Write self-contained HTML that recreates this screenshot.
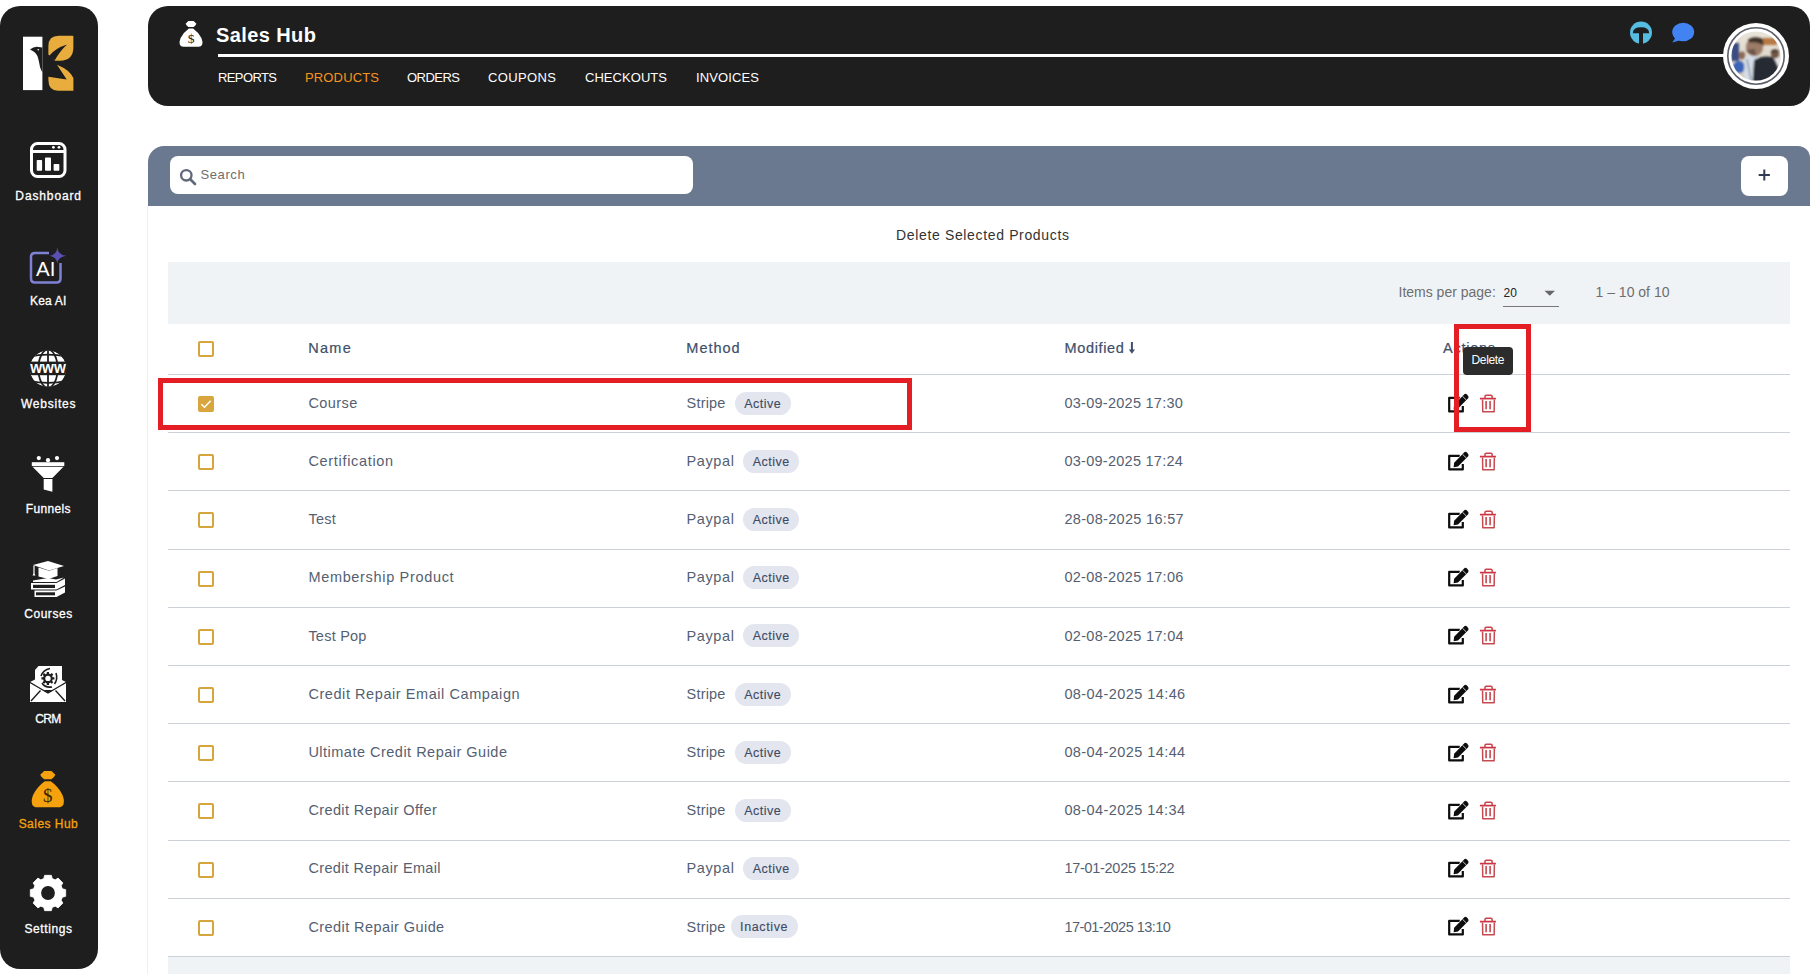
<!DOCTYPE html>
<html><head><meta charset="utf-8"><style>
*{margin:0;padding:0;box-sizing:border-box;}
html,body{width:1810px;height:974px;overflow:hidden;background:#ffffff;font-family:"Liberation Sans",sans-serif;}
.t{position:absolute;white-space:nowrap;}
svg{position:absolute;overflow:visible;}
#sidebar{position:absolute;left:0;top:6px;width:98px;height:963px;background:#1e1e1e;border-radius:20px;}
.sl{position:absolute;left:0;width:96.4px;text-align:center;color:#fff;font-size:12px;line-height:12px;letter-spacing:0.7px;white-space:nowrap;-webkit-text-stroke:0.3px currentColor;}
#header{position:absolute;left:148px;top:6px;width:1662px;height:100px;background:#1e1e1e;border-radius:20px;}
.nav{position:absolute;top:70.8px;font-size:13px;line-height:13px;color:#fff;white-space:nowrap;}
#card{position:absolute;left:147px;top:206px;width:1663px;height:780px;background:#fff;border-left:1px solid #efefef;}
#cardhead{position:absolute;left:148px;top:146px;width:1662px;height:60px;background:#6b7990;border-radius:16px 12px 0 0;}
#search{position:absolute;left:170px;top:156px;width:523px;height:38px;background:#fff;border-radius:8px;}
#plus{position:absolute;left:1741px;top:156px;width:47px;height:40px;background:#fff;border-radius:8px;}
#pag{position:absolute;left:168px;top:262px;width:1622px;height:62px;background:#eff3f6;}
#foot{position:absolute;left:168px;top:957px;width:1622px;height:30px;background:#eff3f6;}
.hd{position:absolute;top:341px;font-size:14.5px;line-height:14.5px;color:#3e4f69;font-weight:400;-webkit-text-stroke:0.2px #3e4f69;letter-spacing:1.0px;white-space:nowrap;}
.dv{position:absolute;left:168px;width:1622px;height:1px;background:#cdd1d9;}
.cell{position:absolute;font-size:14.5px;line-height:14.5px;color:#555f72;white-space:nowrap;}
.badge{position:absolute;height:23px;border-radius:12px;background:#e3e5ef;color:#3e4a63;font-size:12.5px;line-height:24px;font-weight:400;-webkit-text-stroke:0.12px #3e4a63;text-align:center;white-space:nowrap;}
.cb{position:absolute;left:198px;width:16px;height:16px;border:2px solid #d6a53c;border-radius:2px;}
.redbox{position:absolute;border:5px solid #e41e25;}
</style></head>
<body>
<div id="sidebar"></div>
<svg style="left:0;top:0" width="98" height="120" viewBox="0 0 98 120">
<rect x="23" y="36.7" width="19.4" height="53.4" fill="#fff"/>
<path d="M30 49.4 Q34 46.2 38.5 47 L42.4 47.5 L42.4 72.5 Q41 70 40 67 Q38.8 60 37.6 56.5 Q36 52 30 49.4 Z" fill="#1e1e1e"/>
<circle cx="38.3" cy="49.8" r="0.8" fill="#fff"/>
<path d="M48.4 54.5 L48.4 46 Q48.4 35.7 58.7 35.7 L72.4 35.7 Q73.4 35.7 73.4 36.7 L73.4 47 Q73.4 60.7 60 60.7 L55 60.7 Z" fill="#e8ad3c"/>
<path d="M49 56 Q55.5 48 67 44.5 Q60 51 54.6 60.5 Z" fill="#1e1e1e"/>
<path d="M57 64.7 Q70 70 73.4 78 L73.4 90.7 L58 90.7 Q48.4 90.7 48.4 80 L48.4 76.7 L66.7 79.4 Z" fill="#e8ad3c"/>
</svg>
<svg style="left:0;top:130" width="98" height="60" viewBox="0 130 98 60">
<rect x="31.5" y="143.5" width="33.5" height="33" rx="6" fill="none" stroke="#fff" stroke-width="3"/>
<rect x="31.5" y="150" width="33.5" height="3" fill="#fff"/>
<circle cx="53.4" cy="147.3" r="1.4" fill="#fff"/>
<circle cx="59" cy="147.3" r="1.4" fill="#fff"/>
<rect x="36.7" y="160" width="5.4" height="10.7" rx="0.8" fill="#fff"/>
<rect x="45" y="157.5" width="6" height="13.2" rx="0.8" fill="#fff"/>
<rect x="53.6" y="164" width="5.7" height="6.7" rx="0.8" fill="#fff"/>
</svg>
<svg style="left:0;top:240" width="98" height="60" viewBox="0 240 98 60">
<path d="M49 253 L35 253 Q31 253 31 257 L31 278.5 Q31 282.5 35 282.5 L56.5 282.5 Q60.5 282.5 60.5 278.5 L60.5 263" fill="none" stroke="#7f82d4" stroke-width="2.5"/>
<path d="M57.3 247.8 Q58 254.8 66.3 255.8 Q58 256.8 57.3 263.8 Q56.6 256.8 49.5 255.8 Q56.6 254.8 57.3 247.8 Z" fill="#5a4fb2"/>
<text x="36" y="275.7" font-family="Liberation Sans" font-size="20.5" fill="#fff">AI</text>
</svg>
<svg style="left:0;top:340" width="98" height="60" viewBox="0 340 98 60">
<defs><clipPath id="gc"><circle cx="48" cy="368.7" r="18.3"/></clipPath></defs>
<g clip-path="url(#gc)">
<circle cx="48" cy="368.7" r="18.3" fill="#fff"/>
<path d="M48 350 L48 388" stroke="#1e1e1e" stroke-width="1.8"/>
<ellipse cx="48" cy="368.7" rx="9.6" ry="19" fill="none" stroke="#1e1e1e" stroke-width="1.8"/>
<path d="M28 356.8 Q48 352.5 68 356.8" fill="none" stroke="#1e1e1e" stroke-width="1.8"/>
<path d="M28 380.6 Q48 385 68 380.6" fill="none" stroke="#1e1e1e" stroke-width="1.8"/>
<rect x="28" y="361.6" width="40" height="13.6" fill="#1e1e1e"/>
</g>
<text x="30.2" y="373" font-family="Liberation Sans" font-weight="700" font-size="17" fill="#fff" textLength="35.6" lengthAdjust="spacingAndGlyphs">www</text>
</svg>
<svg style="left:0;top:445" width="98" height="60" viewBox="0 445 98 60">
<circle cx="38.8" cy="458.1" r="2.1" fill="#fff"/>
<circle cx="48" cy="460.2" r="2.1" fill="#fff"/>
<circle cx="57" cy="458.1" r="2.1" fill="#fff"/>
<rect x="31.8" y="462.2" width="32.5" height="3.8" fill="#fff"/>
<path d="M32.5 466.8 L63.5 466.8 L52.4 477.9 L43.7 477.9 Z" fill="#fff"/>
<path d="M43.7 479 L52.4 479 L52.4 491.8 L43.7 489.4 Z" fill="#fff"/>
</svg>
<svg style="left:0;top:550" width="98" height="60" viewBox="0 550 98 60">
<path d="M33 565 L48 561 L64 566 L49 570.5 Z" fill="#fff"/>
<path d="M38.5 567.5 L38.5 576.5 L48.5 579 L57.5 576 L57.5 568 L49 570.8 Z" fill="#fff"/>
<path d="M34 565.5 L34 573.5" stroke="#fff" stroke-width="1.2"/>
<path d="M32.5 575.5 L34 572.5 L35.5 575.5 Z" fill="#fff"/>
<path d="M31 583 L56.5 583 L65 578.5 L65 585 L56.5 589.5 L31 589.5 Z" fill="#fff"/>
<path d="M33 584.8 L55 584.8 L55 588 L33 588 Z" fill="#1e1e1e"/>
<path d="M34.5 590.5 L56.5 590.5 L65 586.5 L65 592.5 L56.5 597 L34.5 597 Z" fill="#fff"/>
<path d="M36 592.3 L55 592.3 L55 595.3 L36 595.3 Z" fill="#1e1e1e"/>
<path d="M33 580.5 L48 578 L56 579.5 L64 577.5 L56.5 582 L33 582 Z" fill="#fff"/>
</svg>
<svg style="left:0;top:655" width="98" height="60" viewBox="0 655 98 60">
<path d="M35 670 L38.5 666 L62 666 L62 690 L35 690 Z" fill="#fff"/>
<path d="M46.77 671.90 L49.03 671.90 L49.12 673.65 L50.39 674.18 L51.70 673.00 L53.30 674.60 L52.12 675.91 L52.65 677.18 L54.40 677.27 L54.40 679.53 L52.65 679.62 L52.12 680.89 L53.30 682.20 L51.70 683.80 L50.39 682.62 L49.12 683.15 L49.03 684.90 L46.77 684.90 L46.68 683.15 L45.41 682.62 L44.10 683.80 L42.50 682.20 L43.68 680.89 L43.15 679.62 L41.40 679.53 L41.40 677.27 L43.15 677.18 L43.68 675.91 L42.50 674.60 L44.10 673.00 L45.41 674.18 L46.68 673.65 Z" fill="#1e1e1e"/>
<circle cx="48" cy="678.4" r="2.7" fill="#fff"/>
<g stroke="#1e1e1e" stroke-width="1.6" fill="none">
<path d="M41 676 Q43 670 50 668.5"/><path d="M56 673 Q58 679 54.5 684"/><path d="M52 687 Q45 688 42 683"/>
</g>
<path d="M30 682.5 L48 693 L66 682.5 L66 702 L30 702 Z" fill="#fff"/>
<path d="M30 682 L35 679.5 L35 685 Z M66 682 L61 679.5 L61 685 Z" fill="#fff"/>
<path d="M31 701 L40.5 690.5 M65 701 L55.5 690.5" stroke="#1e1e1e" stroke-width="1.4"/>
<path d="M30 682.5 L48 693 L66 682.5" fill="none" stroke="#1e1e1e" stroke-width="1.3"/>
</svg>
<svg style="left:0;top:760" width="98" height="60" viewBox="0 760 98 60"><g transform="translate(47.8 770.7) scale(1.404) translate(-191 -20.8)"><path d="M188.4 21 L193.6 21 L196.4 23.7 Q195.6 25.7 193.6 26.9 L188.4 26.9 Q186.4 25.7 185.6 23.7 Z" fill="#f5a20e"/><path d="M188.9 28.4 L193.1 28.4 Q198.3 32 201.4 38 Q203.1 42 202.1 44.8 Q201.3 46.8 198.6 46.8 L183.4 46.8 Q180.7 46.8 179.9 44.8 Q178.9 42 180.6 38 Q183.7 32 188.9 28.4 Z" fill="#f5a20e"/><text x="191" y="42.8" text-anchor="middle" font-family="Liberation Serif" font-size="13.5" fill="#3a2400">$</text></g></svg>
<svg style="left:0;top:865" width="98" height="60" viewBox="0 865 98 60">
<path d="M44.63 875.32 L51.37 875.32 L52.18 878.60 L55.23 879.86 L58.12 878.11 L62.89 882.88 L61.14 885.77 L62.40 888.82 L65.68 889.63 L65.68 896.37 L62.40 897.18 L61.14 900.23 L62.89 903.12 L58.12 907.89 L55.23 906.14 L52.18 907.40 L51.37 910.68 L44.63 910.68 L43.82 907.40 L40.77 906.14 L37.88 907.89 L33.11 903.12 L34.86 900.23 L33.60 897.18 L30.32 896.37 L30.32 889.63 L33.60 888.82 L34.86 885.77 L33.11 882.88 L37.88 878.11 L40.77 879.86 L43.82 878.60 Z" fill="#fff" stroke="#fff" stroke-width="0.8" stroke-linejoin="round"/>
<circle cx="48" cy="893" r="6.9" fill="#1e1e1e"/>
</svg>
<div class="sl" style="top:189.6px;color:#fff"><span style="letter-spacing:0.873px;margin-right:-0.873px">Dashboard</span></div>
<div class="sl" style="top:294.7px;color:#fff"><span style="letter-spacing:0.225px;margin-right:-0.225px">Kea AI</span></div>
<div class="sl" style="top:398.4px;color:#fff"><span style="letter-spacing:0.780px;margin-right:-0.780px">Websites</span></div>
<div class="sl" style="top:503.4px;color:#fff"><span style="letter-spacing:0.333px;margin-right:-0.333px">Funnels</span></div>
<div class="sl" style="top:608.4px;color:#fff"><span style="letter-spacing:0.552px;margin-right:-0.552px">Courses</span></div>
<div class="sl" style="top:713.4px;color:#fff"><span style="letter-spacing:-0.714px;margin-right:0.714px">CRM</span></div>
<div class="sl" style="top:818.4px;color:#f5a20e"><span style="letter-spacing:0.466px;margin-right:-0.466px">Sales Hub</span></div>
<div class="sl" style="top:922.6px;color:#fff"><span style="letter-spacing:0.606px;margin-right:-0.606px">Settings</span></div>
<div id="header"></div>
<svg style="left:170px;top:15px" width="40" height="40" viewBox="170 15 40 40"><path d="M188.4 21 L193.6 21 L196.4 23.7 Q195.6 25.7 193.6 26.9 L188.4 26.9 Q186.4 25.7 185.6 23.7 Z" fill="#fff"/><path d="M188.9 28.4 L193.1 28.4 Q198.3 32 201.4 38 Q203.1 42 202.1 44.8 Q201.3 46.8 198.6 46.8 L183.4 46.8 Q180.7 46.8 179.9 44.8 Q178.9 42 180.6 38 Q183.7 32 188.9 28.4 Z" fill="#fff"/><text x="191" y="42.8" text-anchor="middle" font-family="Liberation Serif" font-size="13.5" fill="#1e1e1e">$</text></svg>
<div class="t" style="left:216px;top:24.6px;font-size:20px;line-height:20px;font-weight:700;color:#fff;letter-spacing:0.4px">Sales Hub</div>
<div style="position:absolute;left:218px;top:54px;width:1510px;height:2.5px;background:#fff"></div>
<div class="nav" style="left:218px;color:#fff;letter-spacing:-0.602px">REPORTS</div>
<div class="nav" style="left:305px;color:#f7941d;letter-spacing:0.150px">PRODUCTS</div>
<div class="nav" style="left:407px;color:#fff;letter-spacing:-0.525px">ORDERS</div>
<div class="nav" style="left:488px;color:#fff;letter-spacing:0.378px">COUPONS</div>
<div class="nav" style="left:585px;color:#fff;letter-spacing:0.047px">CHECKOUTS</div>
<div class="nav" style="left:696px;color:#fff;letter-spacing:0.125px">INVOICES</div>
<svg style="left:1625px;top:18px" width="32" height="30" viewBox="1625 18 32 30">
<circle cx="1641" cy="32.6" r="11" fill="#56bde0"/>
<path d="M1632.8 33.2 Q1633 27.3 1641 27.3 Q1649 27.3 1649.2 33.2 Z" fill="#1e1e1e"/>
<rect x="1639" y="29" width="4" height="16" fill="#1e1e1e"/>
</svg>
<svg style="left:1668px;top:18px" width="32" height="30" viewBox="1668 18 32 30">
<ellipse cx="1683.2" cy="32" rx="11" ry="9.3" fill="#4183f3"/>
<path d="M1676 37 L1672.3 42.6 L1681 40 Z" fill="#4183f3"/>
</svg>
<svg style="left:1722px;top:22px" width="68" height="68" viewBox="0 0 68 68">
<defs><clipPath id="av"><circle cx="34" cy="34" r="24.6"/></clipPath>
<linearGradient id="bgp" x1="0" y1="0" x2="0" y2="1"><stop offset="0" stop-color="#ece8df"/><stop offset="0.6" stop-color="#ddd5c8"/><stop offset="1" stop-color="#cfc6b8"/></linearGradient>
<filter id="bl" x="-0.2" y="-0.2" width="1.4" height="1.4"><feGaussianBlur stdDeviation="0.9"/></filter></defs>
<circle cx="34" cy="34" r="33" fill="#fff"/>
<circle cx="34" cy="34" r="28.2" fill="none" stroke="#5a5f68" stroke-width="1.6"/>
<g clip-path="url(#av)">
<rect x="0" y="0" width="68" height="68" fill="url(#bgp)"/>
<g filter="url(#bl)">
<rect x="41" y="16" width="14" height="7" fill="#b87a45"/>
<rect x="9" y="21" width="8" height="18" fill="#3a4e80"/>
<ellipse cx="20" cy="33.5" rx="3.2" ry="4" fill="#8a6a58"/>
<ellipse cx="17" cy="45" rx="6" ry="6" fill="#3b63b8"/>
<ellipse cx="53" cy="32" rx="4" ry="4.6" fill="#6e5444"/>
<path d="M49 29 Q53 26 57 29 L57 30 Q53 28 49 31 Z" fill="#2d241e"/>
<rect x="51" y="36.5" width="7" height="6" fill="#e8e8ec"/>
<path d="M22 68 L22.4 36 Q28 32 36 33.5 L36 68 Z" fill="#d6dfe9"/>
<path d="M30 68 L32 38 Q40 33 50 35 Q58 40 58 68 Z" fill="#262a33"/>
<path d="M25 37 L29 58" stroke="#3a4052" stroke-width="0.8"/>
<ellipse cx="32.5" cy="25" rx="8.5" ry="9.3" fill="#9c7c68"/>
<path d="M26 17.5 Q33 13.5 41 17 L41.5 24 Q37 19.5 27 20.5 Z" fill="#3c3028"/>
<path d="M24 28 Q28 34 34 33 L33 27 Z" fill="#6c5446"/>
</g>
</g>
</svg>
<div id="card"></div>
<div id="cardhead"></div>
<div id="search"></div>
<div id="plus"></div>
<svg style="left:178px;top:166px" width="20" height="20" viewBox="178 166 20 20">
<circle cx="186.3" cy="175.3" r="5.2" fill="none" stroke="#5f6978" stroke-width="2.3"/>
<path d="M190 179 L195 184" stroke="#5f6978" stroke-width="2.6" stroke-linecap="round"/>
</svg>
<div class="t" style="left:200.5px;top:167.9px;font-size:13px;line-height:13px;color:#6d6d6d;letter-spacing:0.6px">Search</div>
<svg style="left:1755px;top:166px" width="18" height="18" viewBox="1755 166 18 18">
<path d="M1764.3 169.5 L1764.3 180.5 M1758.7 175 L1769.9 175" stroke="#2e3b52" stroke-width="2"/>
</svg>
<div class="t" style="left:896px;top:228.1px;font-size:14px;line-height:14px;color:#333;letter-spacing:0.65px">Delete Selected Products</div>
<div id="pag"></div>
<div class="t" style="left:1398.5px;top:285.1px;font-size:14px;line-height:14px;color:#6e6e6e">Items per page:</div>
<div class="t" style="left:1503.5px;top:286.8px;font-size:12px;line-height:12px;color:#222;letter-spacing:0px">20</div>
<svg style="left:1540px;top:286px" width="20" height="12" viewBox="1540 286 20 12">
<path d="M1544.5 290.8 L1555 290.8 L1549.75 295.8 Z" fill="#666"/>
</svg>
<div style="position:absolute;left:1503px;top:306px;width:56px;height:1px;background:#777"></div>
<div class="t" style="left:1595.5px;top:285.1px;font-size:14px;line-height:14px;color:#6e6e6e">1 – 10 of 10</div>
<div class="cb" style="top:341px"></div>
<div class="hd" style="left:308.3px;letter-spacing:1.271px">Name</div>
<div class="hd" style="left:686.3px;letter-spacing:1.005px">Method</div>
<div class="hd" style="left:1064.5px;letter-spacing:0.655px">Modified</div>
<div class="hd" style="left:1443px;letter-spacing:0.740px">Actions</div>
<svg style="left:1126px;top:340px" width="12" height="16" viewBox="1126 340 12 16">
<path d="M1131.9 342 L1131.9 351" stroke="#3e4f69" stroke-width="2"/>
<path d="M1128.8 349.5 L1135 349.5 L1131.9 353.8 Z" fill="#3e4f69"/>
</svg>
<div class="dv" style="top:374px"></div>
<div class="cb" style="top:396.0px;background:#d9a53e;border:none"></div>
<svg style="left:198px;top:396.0px" width="16" height="16" viewBox="0 0 16 16"><path d="M3.3 8.2 L6.5 11.2 L12.7 4.8" fill="none" stroke="#fff" stroke-width="1.5"/></svg>
<div class="cell" style="left:308.4px;top:395.7px;letter-spacing:0.450px">Course</div>
<div class="cell" style="left:686.6px;top:395.7px;letter-spacing:0.182px">Stripe</div>
<div class="badge" style="left:734.7px;top:391.5px;width:56px"><span style="letter-spacing:0.451px">Active</span></div>
<div class="cell" style="left:1064.4px;top:395.7px;letter-spacing:0.267px">03-09-2025 17:30</div>
<svg style="left:1446px;top:392.6px" width="26" height="22" viewBox="0 0 26 22">
<path d="M13.8 4.8 L3.2 4.8 L3.2 18.4 L16.8 18.4 L16.8 12.9" fill="none" stroke="#0d0d0d" stroke-width="2.2" stroke-linejoin="round"/>
<path d="M7.6 16.2 L8.12 11.81 L18.6 1.1 Q19.6 0.4 21.2 1.7 Q22.9 3.3 22.46 4.88 L11.98 15.59 Z" fill="#0d0d0d" stroke="#fff" stroke-width="1.1" paint-order="stroke" stroke-linejoin="round"/>
<path d="M20.36 7.02 L16.5 3.24" stroke="#fff" stroke-width="0.8"/>
</svg>
<svg style="left:1478px;top:394.5px" width="20" height="20" viewBox="0 0 20 20">
<path d="M1.9 3.6 L17.9 3.6" stroke="#cf3342" stroke-width="1.7"/>
<path d="M6.95 3.4 L6.95 1.6 Q6.95 0.25 8.3 0.25 L12.8 0.25 Q14.15 0.25 14.15 1.6 L14.15 3.4" fill="none" stroke="#c8434b" stroke-width="1.5"/>
<path d="M4.55 4.4 L4.75 16.7 L16.15 16.7 L16.35 4.4" fill="none" stroke="#c64a50" stroke-width="1.5" stroke-linejoin="round"/>
<path d="M8.1 5.9 L8.1 14.2 M12.1 5.9 L12.1 14.2" stroke="#c64a50" stroke-width="1.6"/>
</svg>
<div class="dv" style="top:432px"></div>
<div class="cb" style="top:454.2px"></div>
<div class="cell" style="left:308.4px;top:453.9px;letter-spacing:0.686px">Certification</div>
<div class="cell" style="left:686.6px;top:453.9px;letter-spacing:0.591px">Paypal</div>
<div class="badge" style="left:743.2px;top:449.7px;width:56px"><span style="letter-spacing:0.451px">Active</span></div>
<div class="cell" style="left:1064.4px;top:453.9px;letter-spacing:0.267px">03-09-2025 17:24</div>
<svg style="left:1446px;top:450.8px" width="26" height="22" viewBox="0 0 26 22">
<path d="M13.8 4.8 L3.2 4.8 L3.2 18.4 L16.8 18.4 L16.8 12.9" fill="none" stroke="#0d0d0d" stroke-width="2.2" stroke-linejoin="round"/>
<path d="M7.6 16.2 L8.12 11.81 L18.6 1.1 Q19.6 0.4 21.2 1.7 Q22.9 3.3 22.46 4.88 L11.98 15.59 Z" fill="#0d0d0d" stroke="#fff" stroke-width="1.1" paint-order="stroke" stroke-linejoin="round"/>
<path d="M20.36 7.02 L16.5 3.24" stroke="#fff" stroke-width="0.8"/>
</svg>
<svg style="left:1478px;top:452.7px" width="20" height="20" viewBox="0 0 20 20">
<path d="M1.9 3.6 L17.9 3.6" stroke="#cf3342" stroke-width="1.7"/>
<path d="M6.95 3.4 L6.95 1.6 Q6.95 0.25 8.3 0.25 L12.8 0.25 Q14.15 0.25 14.15 1.6 L14.15 3.4" fill="none" stroke="#c8434b" stroke-width="1.5"/>
<path d="M4.55 4.4 L4.75 16.7 L16.15 16.7 L16.35 4.4" fill="none" stroke="#c64a50" stroke-width="1.5" stroke-linejoin="round"/>
<path d="M8.1 5.9 L8.1 14.2 M12.1 5.9 L12.1 14.2" stroke="#c64a50" stroke-width="1.6"/>
</svg>
<div class="dv" style="top:490px"></div>
<div class="cb" style="top:512.4px"></div>
<div class="cell" style="left:308.4px;top:512.1px;letter-spacing:0.235px">Test</div>
<div class="cell" style="left:686.6px;top:512.1px;letter-spacing:0.591px">Paypal</div>
<div class="badge" style="left:743.2px;top:507.9px;width:56px"><span style="letter-spacing:0.451px">Active</span></div>
<div class="cell" style="left:1064.4px;top:512.1px;letter-spacing:0.313px">28-08-2025 16:57</div>
<svg style="left:1446px;top:509.0px" width="26" height="22" viewBox="0 0 26 22">
<path d="M13.8 4.8 L3.2 4.8 L3.2 18.4 L16.8 18.4 L16.8 12.9" fill="none" stroke="#0d0d0d" stroke-width="2.2" stroke-linejoin="round"/>
<path d="M7.6 16.2 L8.12 11.81 L18.6 1.1 Q19.6 0.4 21.2 1.7 Q22.9 3.3 22.46 4.88 L11.98 15.59 Z" fill="#0d0d0d" stroke="#fff" stroke-width="1.1" paint-order="stroke" stroke-linejoin="round"/>
<path d="M20.36 7.02 L16.5 3.24" stroke="#fff" stroke-width="0.8"/>
</svg>
<svg style="left:1478px;top:510.9px" width="20" height="20" viewBox="0 0 20 20">
<path d="M1.9 3.6 L17.9 3.6" stroke="#cf3342" stroke-width="1.7"/>
<path d="M6.95 3.4 L6.95 1.6 Q6.95 0.25 8.3 0.25 L12.8 0.25 Q14.15 0.25 14.15 1.6 L14.15 3.4" fill="none" stroke="#c8434b" stroke-width="1.5"/>
<path d="M4.55 4.4 L4.75 16.7 L16.15 16.7 L16.35 4.4" fill="none" stroke="#c64a50" stroke-width="1.5" stroke-linejoin="round"/>
<path d="M8.1 5.9 L8.1 14.2 M12.1 5.9 L12.1 14.2" stroke="#c64a50" stroke-width="1.6"/>
</svg>
<div class="dv" style="top:549px"></div>
<div class="cb" style="top:570.6px"></div>
<div class="cell" style="left:308.4px;top:570.3px;letter-spacing:0.672px">Membership Product</div>
<div class="cell" style="left:686.6px;top:570.3px;letter-spacing:0.591px">Paypal</div>
<div class="badge" style="left:743.2px;top:566.1px;width:56px"><span style="letter-spacing:0.451px">Active</span></div>
<div class="cell" style="left:1064.4px;top:570.3px;letter-spacing:0.300px">02-08-2025 17:06</div>
<svg style="left:1446px;top:567.2px" width="26" height="22" viewBox="0 0 26 22">
<path d="M13.8 4.8 L3.2 4.8 L3.2 18.4 L16.8 18.4 L16.8 12.9" fill="none" stroke="#0d0d0d" stroke-width="2.2" stroke-linejoin="round"/>
<path d="M7.6 16.2 L8.12 11.81 L18.6 1.1 Q19.6 0.4 21.2 1.7 Q22.9 3.3 22.46 4.88 L11.98 15.59 Z" fill="#0d0d0d" stroke="#fff" stroke-width="1.1" paint-order="stroke" stroke-linejoin="round"/>
<path d="M20.36 7.02 L16.5 3.24" stroke="#fff" stroke-width="0.8"/>
</svg>
<svg style="left:1478px;top:569.1px" width="20" height="20" viewBox="0 0 20 20">
<path d="M1.9 3.6 L17.9 3.6" stroke="#cf3342" stroke-width="1.7"/>
<path d="M6.95 3.4 L6.95 1.6 Q6.95 0.25 8.3 0.25 L12.8 0.25 Q14.15 0.25 14.15 1.6 L14.15 3.4" fill="none" stroke="#c8434b" stroke-width="1.5"/>
<path d="M4.55 4.4 L4.75 16.7 L16.15 16.7 L16.35 4.4" fill="none" stroke="#c64a50" stroke-width="1.5" stroke-linejoin="round"/>
<path d="M8.1 5.9 L8.1 14.2 M12.1 5.9 L12.1 14.2" stroke="#c64a50" stroke-width="1.6"/>
</svg>
<div class="dv" style="top:607px"></div>
<div class="cb" style="top:628.8px"></div>
<div class="cell" style="left:308.4px;top:628.5px;letter-spacing:0.225px">Test Pop</div>
<div class="cell" style="left:686.6px;top:628.5px;letter-spacing:0.591px">Paypal</div>
<div class="badge" style="left:743.2px;top:624.3px;width:56px"><span style="letter-spacing:0.451px">Active</span></div>
<div class="cell" style="left:1064.4px;top:628.5px;letter-spacing:0.313px">02-08-2025 17:04</div>
<svg style="left:1446px;top:625.4px" width="26" height="22" viewBox="0 0 26 22">
<path d="M13.8 4.8 L3.2 4.8 L3.2 18.4 L16.8 18.4 L16.8 12.9" fill="none" stroke="#0d0d0d" stroke-width="2.2" stroke-linejoin="round"/>
<path d="M7.6 16.2 L8.12 11.81 L18.6 1.1 Q19.6 0.4 21.2 1.7 Q22.9 3.3 22.46 4.88 L11.98 15.59 Z" fill="#0d0d0d" stroke="#fff" stroke-width="1.1" paint-order="stroke" stroke-linejoin="round"/>
<path d="M20.36 7.02 L16.5 3.24" stroke="#fff" stroke-width="0.8"/>
</svg>
<svg style="left:1478px;top:627.3px" width="20" height="20" viewBox="0 0 20 20">
<path d="M1.9 3.6 L17.9 3.6" stroke="#cf3342" stroke-width="1.7"/>
<path d="M6.95 3.4 L6.95 1.6 Q6.95 0.25 8.3 0.25 L12.8 0.25 Q14.15 0.25 14.15 1.6 L14.15 3.4" fill="none" stroke="#c8434b" stroke-width="1.5"/>
<path d="M4.55 4.4 L4.75 16.7 L16.15 16.7 L16.35 4.4" fill="none" stroke="#c64a50" stroke-width="1.5" stroke-linejoin="round"/>
<path d="M8.1 5.9 L8.1 14.2 M12.1 5.9 L12.1 14.2" stroke="#c64a50" stroke-width="1.6"/>
</svg>
<div class="dv" style="top:665px"></div>
<div class="cb" style="top:687.0px"></div>
<div class="cell" style="left:308.4px;top:686.7px;letter-spacing:0.569px">Credit Repair Email Campaign</div>
<div class="cell" style="left:686.6px;top:686.7px;letter-spacing:0.182px">Stripe</div>
<div class="badge" style="left:734.7px;top:682.5px;width:56px"><span style="letter-spacing:0.451px">Active</span></div>
<div class="cell" style="left:1064.4px;top:686.7px;letter-spacing:0.420px">08-04-2025 14:46</div>
<svg style="left:1446px;top:683.6px" width="26" height="22" viewBox="0 0 26 22">
<path d="M13.8 4.8 L3.2 4.8 L3.2 18.4 L16.8 18.4 L16.8 12.9" fill="none" stroke="#0d0d0d" stroke-width="2.2" stroke-linejoin="round"/>
<path d="M7.6 16.2 L8.12 11.81 L18.6 1.1 Q19.6 0.4 21.2 1.7 Q22.9 3.3 22.46 4.88 L11.98 15.59 Z" fill="#0d0d0d" stroke="#fff" stroke-width="1.1" paint-order="stroke" stroke-linejoin="round"/>
<path d="M20.36 7.02 L16.5 3.24" stroke="#fff" stroke-width="0.8"/>
</svg>
<svg style="left:1478px;top:685.5px" width="20" height="20" viewBox="0 0 20 20">
<path d="M1.9 3.6 L17.9 3.6" stroke="#cf3342" stroke-width="1.7"/>
<path d="M6.95 3.4 L6.95 1.6 Q6.95 0.25 8.3 0.25 L12.8 0.25 Q14.15 0.25 14.15 1.6 L14.15 3.4" fill="none" stroke="#c8434b" stroke-width="1.5"/>
<path d="M4.55 4.4 L4.75 16.7 L16.15 16.7 L16.35 4.4" fill="none" stroke="#c64a50" stroke-width="1.5" stroke-linejoin="round"/>
<path d="M8.1 5.9 L8.1 14.2 M12.1 5.9 L12.1 14.2" stroke="#c64a50" stroke-width="1.6"/>
</svg>
<div class="dv" style="top:723px"></div>
<div class="cb" style="top:745.2px"></div>
<div class="cell" style="left:308.4px;top:744.9px;letter-spacing:0.490px">Ultimate Credit Repair Guide</div>
<div class="cell" style="left:686.6px;top:744.9px;letter-spacing:0.182px">Stripe</div>
<div class="badge" style="left:734.7px;top:740.7px;width:56px"><span style="letter-spacing:0.451px">Active</span></div>
<div class="cell" style="left:1064.4px;top:744.9px;letter-spacing:0.420px">08-04-2025 14:44</div>
<svg style="left:1446px;top:741.8px" width="26" height="22" viewBox="0 0 26 22">
<path d="M13.8 4.8 L3.2 4.8 L3.2 18.4 L16.8 18.4 L16.8 12.9" fill="none" stroke="#0d0d0d" stroke-width="2.2" stroke-linejoin="round"/>
<path d="M7.6 16.2 L8.12 11.81 L18.6 1.1 Q19.6 0.4 21.2 1.7 Q22.9 3.3 22.46 4.88 L11.98 15.59 Z" fill="#0d0d0d" stroke="#fff" stroke-width="1.1" paint-order="stroke" stroke-linejoin="round"/>
<path d="M20.36 7.02 L16.5 3.24" stroke="#fff" stroke-width="0.8"/>
</svg>
<svg style="left:1478px;top:743.7px" width="20" height="20" viewBox="0 0 20 20">
<path d="M1.9 3.6 L17.9 3.6" stroke="#cf3342" stroke-width="1.7"/>
<path d="M6.95 3.4 L6.95 1.6 Q6.95 0.25 8.3 0.25 L12.8 0.25 Q14.15 0.25 14.15 1.6 L14.15 3.4" fill="none" stroke="#c8434b" stroke-width="1.5"/>
<path d="M4.55 4.4 L4.75 16.7 L16.15 16.7 L16.35 4.4" fill="none" stroke="#c64a50" stroke-width="1.5" stroke-linejoin="round"/>
<path d="M8.1 5.9 L8.1 14.2 M12.1 5.9 L12.1 14.2" stroke="#c64a50" stroke-width="1.6"/>
</svg>
<div class="dv" style="top:781px"></div>
<div class="cb" style="top:803.4px"></div>
<div class="cell" style="left:308.4px;top:803.1px;letter-spacing:0.388px">Credit Repair Offer</div>
<div class="cell" style="left:686.6px;top:803.1px;letter-spacing:0.182px">Stripe</div>
<div class="badge" style="left:734.7px;top:798.9px;width:56px"><span style="letter-spacing:0.451px">Active</span></div>
<div class="cell" style="left:1064.4px;top:803.1px;letter-spacing:0.413px">08-04-2025 14:34</div>
<svg style="left:1446px;top:800.0px" width="26" height="22" viewBox="0 0 26 22">
<path d="M13.8 4.8 L3.2 4.8 L3.2 18.4 L16.8 18.4 L16.8 12.9" fill="none" stroke="#0d0d0d" stroke-width="2.2" stroke-linejoin="round"/>
<path d="M7.6 16.2 L8.12 11.81 L18.6 1.1 Q19.6 0.4 21.2 1.7 Q22.9 3.3 22.46 4.88 L11.98 15.59 Z" fill="#0d0d0d" stroke="#fff" stroke-width="1.1" paint-order="stroke" stroke-linejoin="round"/>
<path d="M20.36 7.02 L16.5 3.24" stroke="#fff" stroke-width="0.8"/>
</svg>
<svg style="left:1478px;top:801.9px" width="20" height="20" viewBox="0 0 20 20">
<path d="M1.9 3.6 L17.9 3.6" stroke="#cf3342" stroke-width="1.7"/>
<path d="M6.95 3.4 L6.95 1.6 Q6.95 0.25 8.3 0.25 L12.8 0.25 Q14.15 0.25 14.15 1.6 L14.15 3.4" fill="none" stroke="#c8434b" stroke-width="1.5"/>
<path d="M4.55 4.4 L4.75 16.7 L16.15 16.7 L16.35 4.4" fill="none" stroke="#c64a50" stroke-width="1.5" stroke-linejoin="round"/>
<path d="M8.1 5.9 L8.1 14.2 M12.1 5.9 L12.1 14.2" stroke="#c64a50" stroke-width="1.6"/>
</svg>
<div class="dv" style="top:840px"></div>
<div class="cb" style="top:861.6px"></div>
<div class="cell" style="left:308.4px;top:861.3px;letter-spacing:0.360px">Credit Repair Email</div>
<div class="cell" style="left:686.6px;top:861.3px;letter-spacing:0.591px">Paypal</div>
<div class="badge" style="left:743.2px;top:857.1px;width:56px"><span style="letter-spacing:0.451px">Active</span></div>
<div class="cell" style="left:1064.4px;top:861.3px;letter-spacing:-0.287px">17-01-2025 15:22</div>
<svg style="left:1446px;top:858.2px" width="26" height="22" viewBox="0 0 26 22">
<path d="M13.8 4.8 L3.2 4.8 L3.2 18.4 L16.8 18.4 L16.8 12.9" fill="none" stroke="#0d0d0d" stroke-width="2.2" stroke-linejoin="round"/>
<path d="M7.6 16.2 L8.12 11.81 L18.6 1.1 Q19.6 0.4 21.2 1.7 Q22.9 3.3 22.46 4.88 L11.98 15.59 Z" fill="#0d0d0d" stroke="#fff" stroke-width="1.1" paint-order="stroke" stroke-linejoin="round"/>
<path d="M20.36 7.02 L16.5 3.24" stroke="#fff" stroke-width="0.8"/>
</svg>
<svg style="left:1478px;top:860.1px" width="20" height="20" viewBox="0 0 20 20">
<path d="M1.9 3.6 L17.9 3.6" stroke="#cf3342" stroke-width="1.7"/>
<path d="M6.95 3.4 L6.95 1.6 Q6.95 0.25 8.3 0.25 L12.8 0.25 Q14.15 0.25 14.15 1.6 L14.15 3.4" fill="none" stroke="#c8434b" stroke-width="1.5"/>
<path d="M4.55 4.4 L4.75 16.7 L16.15 16.7 L16.35 4.4" fill="none" stroke="#c64a50" stroke-width="1.5" stroke-linejoin="round"/>
<path d="M8.1 5.9 L8.1 14.2 M12.1 5.9 L12.1 14.2" stroke="#c64a50" stroke-width="1.6"/>
</svg>
<div class="dv" style="top:898px"></div>
<div class="cb" style="top:919.8px"></div>
<div class="cell" style="left:308.4px;top:919.5px;letter-spacing:0.425px">Credit Repair Guide</div>
<div class="cell" style="left:686.6px;top:919.5px;letter-spacing:0.182px">Stripe</div>
<div class="badge" style="left:730.6px;top:915.3px;width:67px"><span style="letter-spacing:0.615px">Inactive</span></div>
<div class="cell" style="left:1064.4px;top:919.5px;letter-spacing:-0.540px">17-01-2025 13:10</div>
<svg style="left:1446px;top:916.4px" width="26" height="22" viewBox="0 0 26 22">
<path d="M13.8 4.8 L3.2 4.8 L3.2 18.4 L16.8 18.4 L16.8 12.9" fill="none" stroke="#0d0d0d" stroke-width="2.2" stroke-linejoin="round"/>
<path d="M7.6 16.2 L8.12 11.81 L18.6 1.1 Q19.6 0.4 21.2 1.7 Q22.9 3.3 22.46 4.88 L11.98 15.59 Z" fill="#0d0d0d" stroke="#fff" stroke-width="1.1" paint-order="stroke" stroke-linejoin="round"/>
<path d="M20.36 7.02 L16.5 3.24" stroke="#fff" stroke-width="0.8"/>
</svg>
<svg style="left:1478px;top:918.3px" width="20" height="20" viewBox="0 0 20 20">
<path d="M1.9 3.6 L17.9 3.6" stroke="#cf3342" stroke-width="1.7"/>
<path d="M6.95 3.4 L6.95 1.6 Q6.95 0.25 8.3 0.25 L12.8 0.25 Q14.15 0.25 14.15 1.6 L14.15 3.4" fill="none" stroke="#c8434b" stroke-width="1.5"/>
<path d="M4.55 4.4 L4.75 16.7 L16.15 16.7 L16.35 4.4" fill="none" stroke="#c64a50" stroke-width="1.5" stroke-linejoin="round"/>
<path d="M8.1 5.9 L8.1 14.2 M12.1 5.9 L12.1 14.2" stroke="#c64a50" stroke-width="1.6"/>
</svg>
<div class="dv" style="top:956px"></div>
<div id="foot"></div>
<div class="redbox" style="left:158px;top:378px;width:754px;height:52px"></div>
<div class="redbox" style="left:1454px;top:324px;width:77px;height:107.5px"></div>
<div style="position:absolute;left:1463px;top:347px;width:50px;height:28px;background:#2c2c2c;border-radius:4px"></div>
<div class="t" style="left:1471.5px;top:354.4px;font-size:12px;line-height:12px;color:#fff;letter-spacing:-0.35px">Delete</div>
</body></html>
